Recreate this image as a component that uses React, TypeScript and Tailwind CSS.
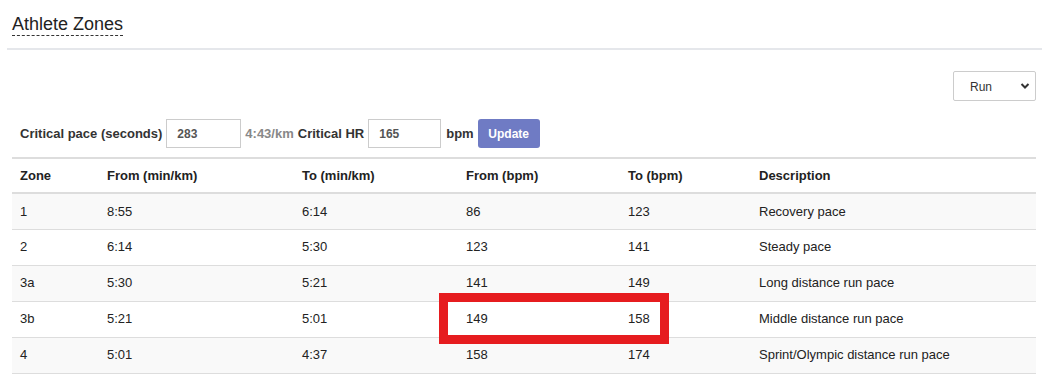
import React from "react";

const rows = [
  ["1", "8:55", "6:14", "86", "123", "Recovery pace"],
  ["2", "6:14", "5:30", "123", "141", "Steady pace"],
  ["3a", "5:30", "5:21", "141", "149", "Long distance run pace"],
  ["3b", "5:21", "5:01", "149", "158", "Middle distance run pace"],
  ["4", "5:01", "4:37", "158", "174", "Sprint/Olympic distance run pace"],
];

const widths = ["w-[87px]", "w-[195px]", "w-[164px]", "w-[162px]", "w-[131px]", ""];

export default function App() {
  return (
    <div className="w-[1052px] h-[381px] bg-white text-[#333] font-['Liberation_Sans',Arial,sans-serif] text-[13px] overflow-hidden">
      <div className="pl-[12px] pt-[13px] h-[48px]">
        <span className="inline-block text-[18px] leading-[22px] text-[#222] border-b border-dashed border-[#333]">
          Athlete Zones
        </span>
      </div>
      <div className="mx-[7px] mr-[10px] h-[2px] bg-[#e5e7eb]" />
      <div className="flex justify-end pr-[16px] pt-[21px]">
        <div className="w-[83px] h-[30px] border border-[#ccc] rounded-[2px] flex items-center justify-between pl-[16px] pr-[5px] text-[12px] text-[#333]">
          <span className="pt-[1px]">Run</span>
          <svg width="10" height="8" viewBox="0 0 10 8">
            <path d="M1.5 2 L5 5.5 L8.5 2" fill="none" stroke="#333" strokeWidth="2" />
          </svg>
        </div>
      </div>
      <div className="pl-[20px] pr-[16px] pt-[18px] flex items-center gap-[4px] font-bold">
        <span>Critical pace (seconds)</span>
        <div className="w-[75px] h-[29px] border border-[#ccc] flex items-center pl-[10px] text-[12px] text-[#555]">283</div>
        <span className="text-[#888]">4:43/km</span>
        <span>Critical HR</span>
        <div className="w-[73px] h-[29px] border border-[#ccc] flex items-center pl-[10px] text-[12px] text-[#555]">165</div>
        <span className="ml-[1px]">bpm</span>
        <button className="w-[62px] h-[29px] rounded-[3px] bg-[#6f7bc4] text-white text-[12px] font-bold">Update</button>
      </div>
      <div className="relative ml-[12px] mr-[16px] mt-[9px]">
        <table className="w-full border-collapse border-t-2 border-[#ddd]">
          <thead>
            <tr className="border-b-2 border-[#ddd] h-[35px]">
              {["Zone", "From (min/km)", "To (min/km)", "From (bpm)", "To (bpm)", "Description"].map((h, i) => (
                <th key={h} className={`${widths[i]} text-left font-bold px-[8px] pt-[1px] text-[#222]`}>{h}</th>
              ))}
            </tr>
          </thead>
          <tbody>
            {rows.map((r, ri) => (
              <tr key={ri} className={`h-[36px] border-b border-[#ddd] ${ri % 2 === 0 ? "bg-[#f9f9f9]" : "bg-white"}`}>
                {r.map((c, ci) => (
                  <td key={ci} className="px-[8px] text-[#222]">{c}</td>
                ))}
              </tr>
            ))}
          </tbody>
        </table>
        <div className="absolute left-[427px] top-[136px] w-[230px] h-[51px] border-[9px] border-[#e61c1f]" />
      </div>
    </div>
  );
}
